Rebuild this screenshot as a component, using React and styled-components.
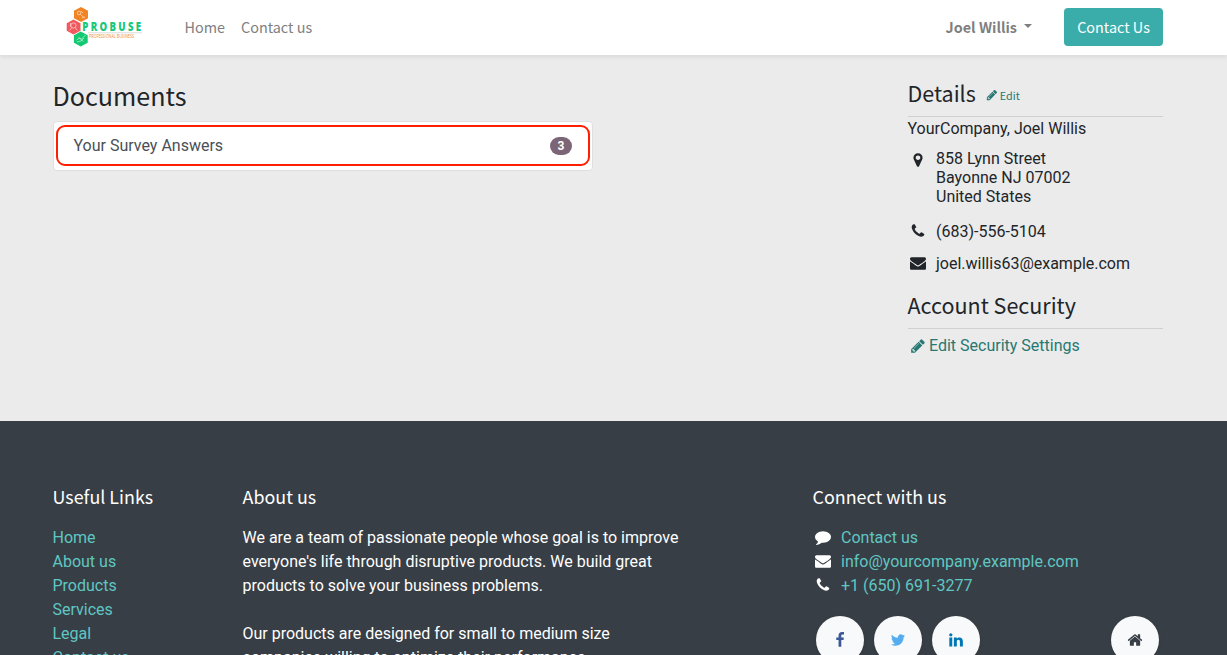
import React from "react";
import styled, { createGlobalStyle } from "styled-components";

const heading = `"Noto Sans CJK JP", "Noto Sans CJK SC", sans-serif`;

const Global = createGlobalStyle`
  *, *::before, *::after { box-sizing: border-box; }
  html, body { margin: 0; height: 655px; overflow: hidden; }
  body {
    background: #ebebeb;
    color: #212529;
    font: 400 16px/24px Roboto, sans-serif;
  }
`;

const Page = styled.div`
  display: flex;
  flex-direction: column;
  height: 655px;
  overflow: hidden;
`;

const Header = styled.header`
  display: flex;
  align-items: center;
  flex: none;
  height: 55px;
  padding: 0 64px 1px 53px;
  background: #fff;
  box-shadow: 0 2px 4px rgba(0, 0, 0, 0.075);
  font-family: ${heading};
`;

const Brand = styled.a`
  display: flex;
  width: 131.5px;
  padding-left: 12px;
`;

const NavLink = styled.a`
  font-size: 14.4px;
  color: #808080;
  white-space: nowrap;
  margin-right: 16px;
`;

const UserMenu = styled.button`
  display: flex;
  align-items: center;
  gap: 7px;
  margin-left: auto;
  margin-right: 32px;
  padding: 0;
  border: 0;
  background: none;
  color: #7f7f7f;
  font: 700 14.4px/24px ${heading};
`;

const Caret = styled.span`
  border: 4.8px solid transparent;
  border-top-color: currentColor;
  border-bottom: 0;
  margin-bottom: 3px;
`;

const ContactButton = styled.button`
  width: 99px;
  height: 38px;
  padding: 0;
  border: 0;
  border-radius: 4px;
  background: #3aadaa;
  color: #fff;
  font: 400 14.4px/24px ${heading};
`;

const Main = styled.main`
  display: flex;
  justify-content: space-between;
  flex: none;
  height: 366px;
  padding: 0 64.5px 0 52.5px;
`;

const Documents = styled.section`
  width: 540px;
  padding-top: 23px;
`;

const Title = styled.h3`
  margin: 0;
  font: 400 ${(p) => p.$size}px/${(p) => p.$line}px ${heading};
`;

const DocumentList = styled.div`
  margin: 9px -0.5px 0 0.5px;
  padding: 3px 2px 4px;
  border: 1px solid #dfdfdf;
  border-radius: 4px;
  background: #fff;
`;

const DocumentRow = styled.a`
  display: flex;
  align-items: center;
  justify-content: space-between;
  height: 41px;
  padding: 0 16px 0 15.5px;
  border: 2px solid #ff1e00;
  border-radius: 9px;
  color: #495057;
`;

const Badge = styled.span`
  width: 22px;
  height: 18px;
  border-radius: 10px;
  background: #7c6576;
  color: #fff;
  font: 700 12px/18px Roboto, sans-serif;
  text-align: center;
`;

const Sidebar = styled.aside`
  width: 255px;
  padding-top: 22px;
`;

const SideHeader = styled.div`
  display: flex;
  align-items: center;
  height: ${(p) => p.$height}px;
  padding: ${(p) => p.$top || 0}px 0 ${(p) => p.$bottom || 0}px;
  border-bottom: 1px solid #d0d0d0;
`;

const EditLink = styled.a`
  display: flex;
  align-items: center;
  gap: 2px;
  margin: 5px 0 0 10px;
  color: #277873;
  font: 400 10.8px/16px ${heading};
`;

const Company = styled.div`
  line-height: 24px;
`;

const ContactRow = styled.div`
  display: flex;
  gap: 8px;
  margin-top: ${(p) => p.$top}px;
  line-height: 19px;
`;

const IconCell = styled.span`
  display: flex;
  justify-content: center;
  width: 20.5px;
  padding-top: ${(p) => p.$drop || 0}px;
  padding-bottom: ${(p) => p.$lift || 0}px;
`;

const SecurityLink = styled.a`
  display: flex;
  align-items: center;
  gap: 3px;
  margin-top: 5px;
  padding-left: 2.5px;
  color: #277873;

  svg { margin-bottom: 1px; }
`;

const Footer = styled.footer`
  display: flex;
  flex: 1;
  min-height: 0;
  padding: 63px 64px 0 52.5px;
  background: #383e45;
  color: #fff;
`;

const FooterColumn = styled.section`
  display: flex;
  flex-direction: column;
  flex: none;
  width: ${(p) => p.$width}px;
`;

const FooterTitle = styled.h5`
  margin: 0 0 18px;
  font: 400 17.9px/24px ${heading};
`;

const FooterLink = styled.a`
  color: #5fc7c3;
`;

const Paragraph = styled.p`
  margin: 0 0 24px;
  white-space: nowrap;
`;

const FooterContact = styled.div`
  display: flex;
  align-items: center;
  gap: 8px;
`;

const Socials = styled.div`
  display: flex;
  gap: 10px;
  margin-top: 18px;
  padding: 0 4px 0 3.5px;
`;

const Circle = styled.a`
  display: flex;
  align-items: center;
  justify-content: center;
  width: 48px;
  height: 48px;
  border-radius: 50%;
  background: #f8f9fa;
  color: ${(p) => p.$color};
  box-shadow: 0 1px 3px rgba(0, 0, 0, 0.15);

  &:last-child { margin-left: auto; }
`;

const icons = {
  phone: "M1600 1240q0 27-10 70.5t-21 68.5q-21 50-122 106-94 51-186 51-27 0-53-3.5t-57.5-12.5-47-14.5-55.5-20.5-49-18q-98-35-175-83-127-79-264-216t-216-264q-48-77-83-175-3-9-18-49t-20.5-55.5-14.5-47-12.5-57.5-3.5-53q0-92 51-186 56-101 106-122 25-11 68.5-21t70.5-10q14 0 21 3 18 6 53 76 11 19 30 54t35 63.5 31 53.5q3 4 17.5 25t21.5 35.5 7 28.5q0 20-28.5 50t-62 55-62 53-28.5 46q0 9 5 22.5t8.5 20.5 14 24 11.5 19q76 137 174 235t235 174q2 1 19 11.5t24 14 20.5 8.5 22.5 5q18 0 46-28.5t53-62 55-62 50-28.5q14 0 28.5 7t35.5 21.5 25 17.5q25 15 53.5 31t63.5 35 54 30q70 35 76 53 3 7 3 21z",
  envelope: "M1792 710v794q0 66-47 113t-113 47h-1472q-66 0-113-47t-47-113v-794q44 49 101 87 362 246 497 345 57 42 92.5 65.5t94.5 48 110 24.5h2q51 0 110-24.5t94.5-48 92.5-65.5q170-123 498-345 57-39 100-87zm0-294q0 79-49 151t-122 123q-376 261-468 325-10 7-42.5 31t-54 38.5-52 32.5-57.5 27-50 9h-2q-23 0-50-9t-57.5-27-52-32.5-54-38.5-42.5-31q-91-64-262-182.5t-205-142.5q-62-42-117-115.5t-55-136.5q0-78 41.5-130t118.5-52h1472q65 0 112.5 47t47.5 113z",
  marker: "M1152 640q0-106-75-181t-181-75-181 75-75 181 75 181 181 75 181-75 75-181zm256 0q0 109-33 179l-364 774q-16 33-47.5 52t-67.5 19-67.5-19-46.5-52l-365-774q-33-70-33-179 0-212 150-362t362-150 362 150 150 362z",
  pencil: "M491 1536l91-91-235-235-91 91v107h128v128h107zm523-928q0-22-22-22-10 0-17 7l-542 542q-7 7-7 17 0 22 22 22 10 0 17-7l542-542q7-7 7-17zm-54-192l416 416-832 832h-416v-416zm683 96q0 53-37 90l-166 166-416-416 166-165q36-38 90-38 53 0 91 38l235 234q37 39 37 91z",
  comment: "M1792 896q0 174-120 321.5t-326 233-450 85.5q-70 0-145-8-198 175-460 242-49 14-114 22-17 2-30.5-9t-17.5-29v-1q-3-4-.5-12t2-10 4.5-9.5l6-9 7-8.5 8-9q7-8 31-34.5t34.5-38 31-39.5 32.5-51 27-59 26-76q-157-89-247.5-220t-90.5-281q0-130 71-248.5t191-204.5 286-136.5 348-50.5 348 50.5 286 136.5 191 204.5 71 248.5z",
  home: "M1472 992v480q0 26-19 45t-45 19h-384v-384h-256v384h-384q-26 0-45-19t-19-45v-480q0-1 .5-3t.5-3l575-474 575 474q1 2 1 6zm223-69l-62 74q-8 9-21 11h-3q-13 0-21-7l-692-577-692 577q-12 8-24 7-13-2-21-11l-62-74q-8-10-7-23.5t11-21.5l719-599q32-26 76-26t76 26l244 204v-195q0-14 9-23t23-9h192q14 0 23 9t9 23v408l219 182q10 8 11 21.5t-7 23.5z",
  facebook: "M1343 12v264h-157q-86 0-116 36t-30 108v189h293l-39 296h-254v759h-306v-759h-255v-296h255v-218q0-186 104-288.5t277-102.5q147 0 228 12z",
  twitter: "M1684 408q-67 98-162 167 1 14 1 42 0 130-38 259.5t-115.5 248.5-184.5 210.5-258 146-323 54.5q-271 0-496-145 35 4 78 4 225 0 401-138-105-2-188-64.5t-114-159.5q33 5 61 5 43 0 85-11-112-23-185.5-111.5t-73.5-205.5v-4q68 38 146 41-66-44-105-115t-39-154q0-88 44-163 121 149 294.5 238.5t371.5 99.5q-8-38-8-74 0-134 94.5-228.5t228.5-94.5q140 0 236 102 109-21 205-78-37 115-142 178 93-10 186-50z",
  linkedin: "M477 625v991h-330v-991h330zm21-306q1 73-50.5 122t-135.5 49h-2q-82 0-132-49t-50-122q0-74 51.5-122.5t134.5-48.5 133 48.5 51 122.5zm1166 729v568h-329v-530q0-105-40.5-164.5t-126.5-59.5q-63 0-105.5 34.5t-63.5 85.5q-11 30-11 81v553h-329q2-399 2-647t-1-296l-1-48h329v144h-2q20-32 41-56t56.5-52 87-43.5 114.5-15.5q171 0 275 113.5t104 332.5z",
};

const Icon = ({ name, size = 16 }) => (
  <svg width={size} height={size} viewBox="0 0 1792 1792" fill="currentColor" aria-hidden="true">
    <path d={icons[name]} />
  </svg>
);

const Logo = () => (
  <svg width="78" height="42" viewBox="65 6 78 42" aria-label="Probuse">
    <path d="M81 7l7 3.8v7.4L81 22l-7-3.8v-7.4z" fill="#f28322" />
    <path d="M73.5 19.5l7 3.8v7.4l-7 3.8-6.8-3.8v-7.4z" fill="#f05a5f" />
    <path d="M80.7 31.5l7 3.8v7.4l-7 3.9-6.8-3.9v-7.4z" fill="#10c971" />
    <g fill="none" stroke="#fff" strokeWidth="0.7" opacity="0.75">
      <circle cx="79" cy="13" r="1.8" />
      <path d="M80.5 14.5l3.5 3M81 11l2 2M82 18l3-1" />
      <circle cx="73.5" cy="25.5" r="2.6" />
      <path d="M69.5 30.5l2.5-3M77.5 30.5l-2.5-3M70.5 23v4" />
      <path d="M76.5 40l3-2 2 1 4-4M77 42l4-1 3-3M78.5 37.5l5 4" />
    </g>
    <path d="M88 32.8h54" stroke="#c9cdcb" strokeWidth="0.7" />
    <text x="82.3" y="30.6" fill="#19c77a" fontFamily="Open Sans, sans-serif" fontWeight="800" fontSize="11.5" transform="translate(82.3 0) scale(.84 1) translate(-82.3 0)" textLength="70" lengthAdjust="spacing">PROBUSE</text>
    <text x="89" y="38" fill="#f08a35" fontFamily="Open Sans, sans-serif" fontSize="4.6" textLength="45" lengthAdjust="spacingAndGlyphs">PROFESSIONAL BUSINESS</text>
  </svg>
);

export default function App() {
  return (
    <Page>
      <Global />
      <Header>
        <Brand><Logo /></Brand>
        <NavLink>Home</NavLink>
        <NavLink>Contact us</NavLink>
        <UserMenu>Joel Willis <Caret /></UserMenu>
        <ContactButton>Contact Us</ContactButton>
      </Header>
      <Main>
        <Documents>
          <Title $size={25.1} $line={34}>Documents</Title>
          <DocumentList>
            <DocumentRow>Your Survey Answers<Badge>3</Badge></DocumentRow>
          </DocumentList>
        </Documents>
        <Sidebar>
          <SideHeader $height={40} $bottom={8}>
            <Title $size={21.5} $line={29}>Details</Title>
            <EditLink><Icon name="pencil" size={12} />Edit</EditLink>
          </SideHeader>
          <Company>YourCompany, Joel Willis</Company>
          <ContactRow $top={8}>
            <IconCell $drop={3}><Icon name="marker" /></IconCell>
            <span>858 Lynn Street<br />Bayonne NJ 07002<br />United States</span>
          </ContactRow>
          <ContactRow $top={16}>
            <IconCell $drop={1}><Icon name="phone" /></IconCell>(683)-556-5104
          </ContactRow>
          <ContactRow $top={13}>
            <IconCell $drop={1}><Icon name="envelope" /></IconCell>joel.willis63@example.com
          </ContactRow>
          <SideHeader $height={56} $top={8}>
            <Title $size={21.5} $line={29}>Account Security</Title>
          </SideHeader>
          <SecurityLink><Icon name="pencil" />Edit Security Settings</SecurityLink>
        </Sidebar>
      </Main>
      <Footer>
        <FooterColumn $width={190}>
          <FooterTitle>Useful Links</FooterTitle>
          {["Home", "About us", "Products", "Services", "Legal", "Contact us"].map((label) => (
            <FooterLink key={label}>{label}</FooterLink>
          ))}
        </FooterColumn>
        <FooterColumn $width={570}>
          <FooterTitle>About us</FooterTitle>
          <Paragraph>
            We are a team of passionate people whose goal is to improve<br />
            everyone's life through disruptive products. We build great<br />
            products to solve your business problems.
          </Paragraph>
          <Paragraph>
            Our products are designed for small to medium size<br />
            companies willing to optimize their performance.
          </Paragraph>
        </FooterColumn>
        <FooterColumn $width={350}>
          <FooterTitle>Connect with us</FooterTitle>
          <FooterContact><IconCell $lift={2}><Icon name="comment" /></IconCell><FooterLink>Contact us</FooterLink></FooterContact>
          <FooterContact><IconCell $lift={2}><Icon name="envelope" /></IconCell><FooterLink>info@yourcompany.example.com</FooterLink></FooterContact>
          <FooterContact><IconCell $lift={2}><Icon name="phone" /></IconCell><FooterLink>+1 (650) 691-3277</FooterLink></FooterContact>
          <Socials>
            <Circle $color="#3b5998"><Icon name="facebook" /></Circle>
            <Circle $color="#55acee"><Icon name="twitter" /></Circle>
            <Circle $color="#0077b5"><Icon name="linkedin" /></Circle>
            <Circle $color="#383e45"><Icon name="home" /></Circle>
          </Socials>
        </FooterColumn>
      </Footer>
    </Page>
  );
}
